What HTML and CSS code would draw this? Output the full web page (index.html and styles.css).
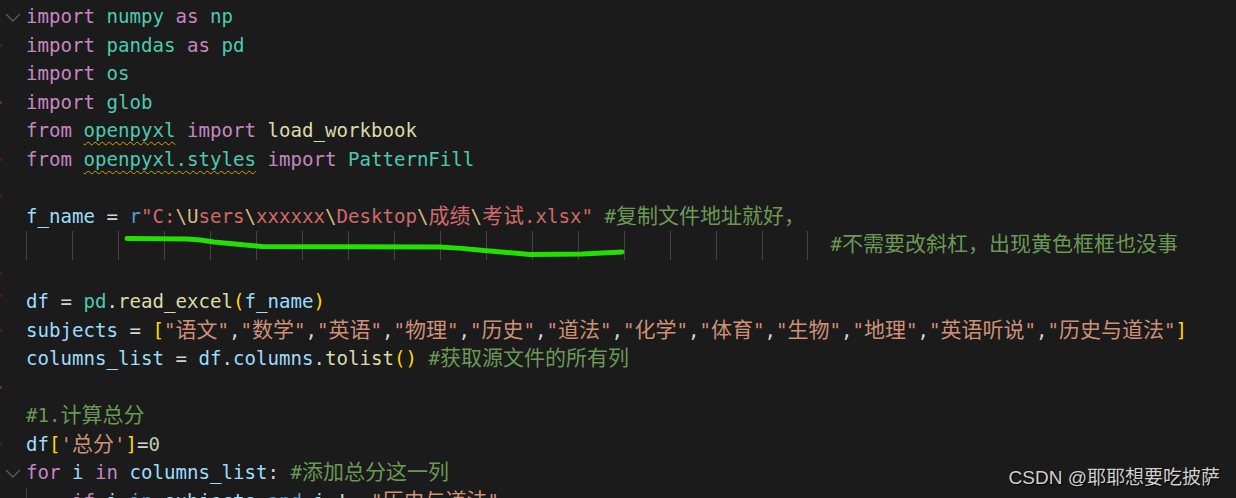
FILE: index.html
```html
<!DOCTYPE html>
<html lang="zh-CN">
<head>
<meta charset="utf-8">
<title>editor</title>
<link rel="stylesheet" href="styles.css">
</head>
<body>
<div class="editor">
  <div class="line"><div class="gutter"><svg class="fold" width="16" height="10" viewBox="0 0 16 10"><polyline points="1,1 8,8 15,1" fill="none" stroke="#5a5a5a" stroke-width="1.4"/></svg></div><div class="code"><span class="k">import</span> <span class="m">numpy</span> <span class="k">as</span> <span class="m">np</span></div></div>
  <div class="line"><div class="gutter"><i class="mark"></i></div><div class="code"><span class="k">import</span> <span class="m">pandas</span> <span class="k">as</span> <span class="m">pd</span></div></div>
  <div class="line"><div class="gutter"></div><div class="code"><span class="k">import</span> <span class="m">os</span></div></div>
  <div class="line"><div class="gutter"><i class="mark orange"></i></div><div class="code"><span class="k">import</span> <span class="m">glob</span></div></div>
  <div class="line"><div class="gutter"></div><div class="code"><span class="k">from</span> <span class="m sq">openpyxl</span> <span class="k">import</span> <span class="f">load_workbook</span></div></div>
  <div class="line"><div class="gutter"><i class="mark"></i></div><div class="code"><span class="k">from</span> <span class="m sq">openpyxl.styles</span> <span class="k">import</span> <span class="m">PatternFill</span></div></div>
  <div class="line"><div class="gutter"><i class="mark low"></i></div><div class="code"></div></div>
  <div class="line"><div class="gutter"></div><div class="code"><span class="v">f_name</span> <span class="o">=</span> <span class="b">r</span><span class="r">"C:</span><span class="e">\U</span><span class="r">sers</span><span class="e">\</span><span class="r">xxxxxx</span><span class="e">\</span><span class="r">Desktop</span><span class="e">\</span><span class="r"><span class="z">成绩</span></span><span class="e">\</span><span class="r"><span class="z">考试</span>.xlsx"</span> <span class="c">#<span class="z">复制文件地址就好，</span></span></div></div>
  <div class="line"><div class="gutter"></div><div class="code"><span class="ind"></span><span class="ind"></span><span class="ind"></span><span class="ind"></span><span class="ind"></span><span class="ind"></span><span class="ind"></span><span class="ind"></span><span class="ind"></span><span class="ind"></span><span class="ind"></span><span class="ind"></span><span class="ind"></span><span class="ind"></span><span class="ind"></span><span class="ind"></span><span class="ind"></span><span class="ind half"></span><span class="c">#<span class="z">不需要改斜杠，出现黄色框框也没事</span></span></div></div>
  <div class="line"><div class="gutter"><i class="mark"></i></div><div class="code"></div></div>
  <div class="line"><div class="gutter"><i class="mark high"></i></div><div class="code"><span class="v">df</span> <span class="o">=</span> <span class="m">pd</span><span class="o">.</span><span class="f">read_excel</span><span class="br">(</span><span class="v">f_name</span><span class="br">)</span></div></div>
  <div class="line"><div class="gutter"><i class="mark"></i></div><div class="code"><span class="v">subjects</span> <span class="o">=</span> <span class="br">[</span><span class="s">"<span class="z">语文</span>"</span><span class="o">,</span><span class="s">"<span class="z">数学</span>"</span><span class="o">,</span><span class="s">"<span class="z">英语</span>"</span><span class="o">,</span><span class="s">"<span class="z">物理</span>"</span><span class="o">,</span><span class="s">"<span class="z">历史</span>"</span><span class="o">,</span><span class="s">"<span class="z">道法</span>"</span><span class="o">,</span><span class="s">"<span class="z">化学</span>"</span><span class="o">,</span><span class="s">"<span class="z">体育</span>"</span><span class="o">,</span><span class="s">"<span class="z">生物</span>"</span><span class="o">,</span><span class="s">"<span class="z">地理</span>"</span><span class="o">,</span><span class="s">"<span class="z">英语听说</span>"</span><span class="o">,</span><span class="s">"<span class="z">历史与道法</span>"</span><span class="br">]</span></div></div>
  <div class="line"><div class="gutter"></div><div class="code"><span class="v">columns_list</span> <span class="o">=</span> <span class="v">df</span><span class="o">.</span><span class="v">columns</span><span class="o">.</span><span class="f">tolist</span><span class="br">()</span> <span class="c">#<span class="z">获取源文件的所有列</span></span></div></div>
  <div class="line"><div class="gutter"><i class="mark orange"></i></div><div class="code"></div></div>
  <div class="line"><div class="gutter"></div><div class="code"><span class="c">#1.<span class="z">计算总分</span></span></div></div>
  <div class="line"><div class="gutter"><i class="mark"></i></div><div class="code"><span class="v">df</span><span class="br">[</span><span class="s">'<span class="z">总分</span>'</span><span class="br">]</span><span class="o">=</span><span class="n">0</span></div></div>
  <div class="line"><div class="gutter"><svg class="fold" width="16" height="10" viewBox="0 0 16 10"><polyline points="1,1 8,8 15,1" fill="none" stroke="#5a5a5a" stroke-width="1.4"/></svg></div><div class="code"><span class="k">for</span> <span class="v">i</span> <span class="k">in</span> <span class="v">columns_list</span><span class="o">:</span> <span class="c">#<span class="z">添加总分这一列</span></span></div></div>
  <div class="line"><div class="gutter"></div><div class="code"><span class="ind"></span><span class="k">if</span> <span class="v">i</span> <span class="b">in</span> <span class="v">subjects</span> <span class="b">and</span> <span class="v">i</span> <span class="o">!=</span> <span class="s">"<span class="z">历史与道法</span>"</span><span class="o">:</span></div></div>

  <svg class="scribble" width="1236" height="498" viewBox="0 0 1236 498">
    <path d="M127 238.5 L188 239 Q200 239.5 214 242 L262 246.5 L440 247 Q462 248 484 250.5 L530 254.5 L582 254 L622 252" fill="none" stroke="#22e000" stroke-width="5" stroke-linecap="round" stroke-linejoin="round"/>
  </svg>
  <div class="watermark">CSDN @耶耶想要吃披萨</div>
</div>
</body>
</html>
```

FILE: styles.css
```css
html, body {
  margin: 0;
  padding: 0;
  background: #1b1b1b;
  overflow: hidden;
}

.editor {
  position: relative;
  width: 1236px;
  height: 498px;
  overflow: hidden;
  padding-top: 3px;
  box-sizing: border-box;
  font-family: "DejaVu Sans Mono", "Liberation Mono", monospace;
  font-size: 19.1px;
  color: #d4d4d4;
}

.line {
  display: flex;
  height: 28.5px;
  line-height: 28.5px;
}

.gutter {
  flex: 0 0 26px;
  display: flex;
  align-items: center;
}

.fold {
  display: block;
  margin-left: 5px;
  margin-top: 1px;
}

.mark {
  display: block;
  width: 2px;
  height: 3px;
  background: #4a1c1c;
}
.mark.orange { background: #5a3518; }
.mark.low { margin-top: 14px; }
.mark.high { margin-bottom: 14px; }

.code {
  flex: 1;
  min-width: 0;
  white-space: pre;
  height: 28.5px;
}

.z {
  font-family: "Noto Sans CJK SC", sans-serif;
  font-size: 21px;
  line-height: 20px;
}

.ind {
  display: inline-block;
  vertical-align: top;
  width: 4ch;
  height: 28.5px;
  border-left: 1px solid #444444;
  box-sizing: border-box;
}
.ind.half { width: 2ch; }

.k { color: #c586c0; }
.m { color: #4ec9b0; }
.f { color: #dcdcaa; }
.v { color: #9cdcfe; }
.o { color: #d4d4d4; }
.s { color: #ce9178; }
.r { color: #d16969; }
.e { color: #d7ba7d; }
.b { color: #569cd6; }
.c { color: #6a9955; }
.n { color: #b5cea8; }
.br { color: #ffd700; }

.sq {
  text-decoration: underline wavy #cca700;
  text-decoration-thickness: 1px;
  text-underline-offset: 4px;
}

.scribble {
  position: absolute;
  left: 0;
  top: 0;
  pointer-events: none;
}

.watermark {
  position: absolute;
  right: 16px;
  bottom: 9px;
  font-family: "Liberation Sans", "Noto Sans CJK SC", sans-serif;
  font-size: 19px;
  line-height: 22px;
  color: #cfcfcf;
  text-shadow: 1px 1px 1px #000;
}
```
